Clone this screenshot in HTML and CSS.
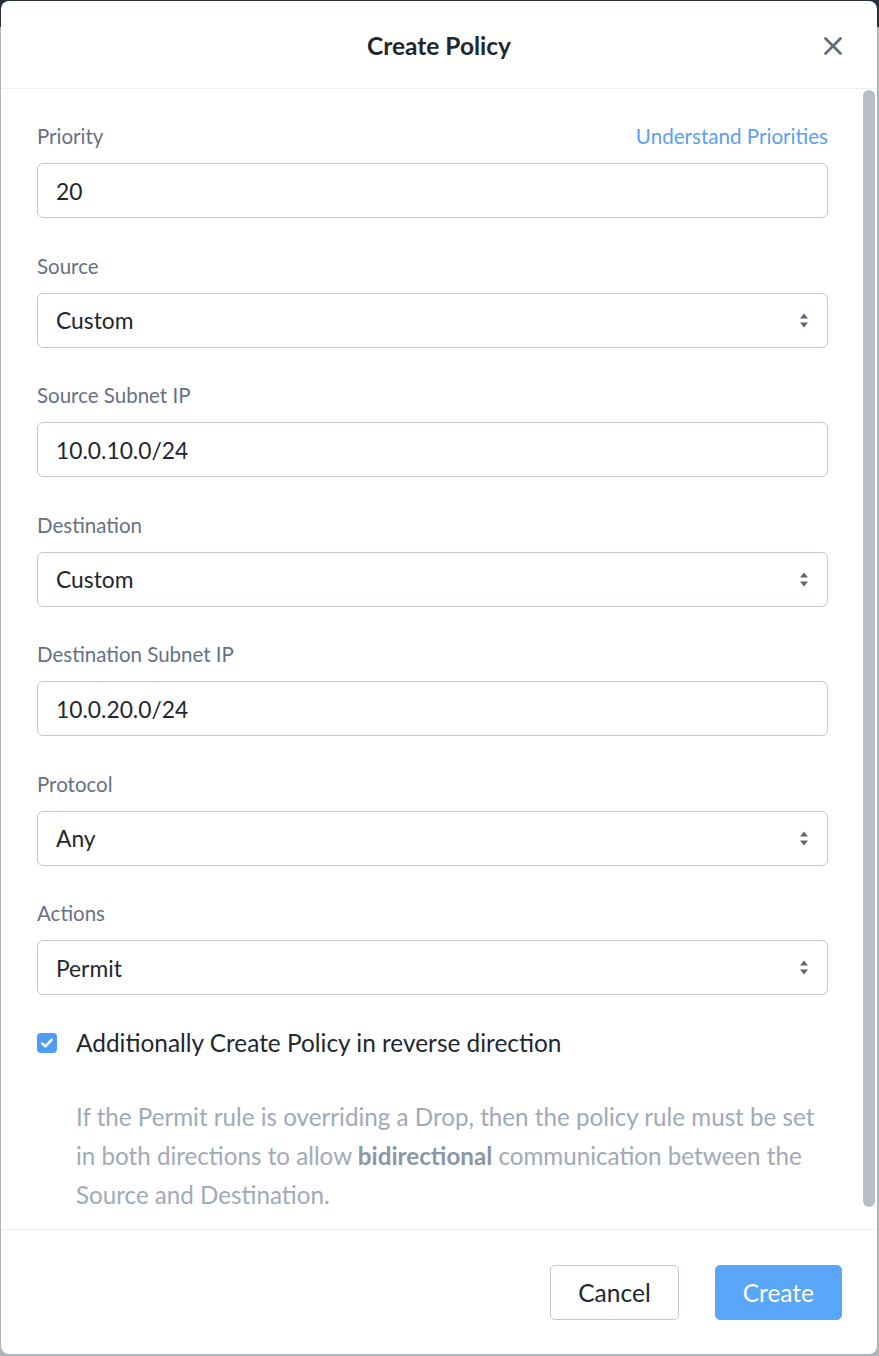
FILE: index.html
```html
<!DOCTYPE html>
<html>
<head>
<meta charset="utf-8">
<link rel="stylesheet" href="styles.css">
</head>
<body>
<div class="backdrop">
  <div class="modal">
    <header class="modal-header">
      <h1 class="modal-title">Create Policy</h1>
      <button class="close-btn" aria-label="Close">
        <svg width="20" height="20" viewBox="0 0 20 20"><path d="M2.5 2.5 L17.5 17.5 M17.5 2.5 L2.5 17.5" stroke="#656d7b" stroke-width="2.8" stroke-linecap="round"/></svg>
      </button>
    </header>
    <div class="modal-body">
      <div class="field">
        <div class="label-row">
          <label class="label">Priority</label>
          <a class="link">Understand Priorities</a>
        </div>
        <div class="input">20</div>
      </div>
      <div class="field">
        <label class="label">Source</label>
        <div class="input select">Custom<svg class="arrows" width="8" height="15" viewBox="0 0 8 15"><path d="M0 5.5 L4 0.5 L8 5.5 Z M0 9.5 L4 14.5 L8 9.5 Z" fill="#5d6675"/></svg></div>
      </div>
      <div class="field">
        <label class="label">Source Subnet IP</label>
        <div class="input">10.0.10.0/24</div>
      </div>
      <div class="field">
        <label class="label">Destination</label>
        <div class="input select">Custom<svg class="arrows" width="8" height="15" viewBox="0 0 8 15"><path d="M0 5.5 L4 0.5 L8 5.5 Z M0 9.5 L4 14.5 L8 9.5 Z" fill="#5d6675"/></svg></div>
      </div>
      <div class="field">
        <label class="label">Destination Subnet IP</label>
        <div class="input">10.0.20.0/24</div>
      </div>
      <div class="field">
        <label class="label">Protocol</label>
        <div class="input select">Any<svg class="arrows" width="8" height="15" viewBox="0 0 8 15"><path d="M0 5.5 L4 0.5 L8 5.5 Z M0 9.5 L4 14.5 L8 9.5 Z" fill="#5d6675"/></svg></div>
      </div>
      <div class="field">
        <label class="label">Actions</label>
        <div class="input select">Permit<svg class="arrows" width="8" height="15" viewBox="0 0 8 15"><path d="M0 5.5 L4 0.5 L8 5.5 Z M0 9.5 L4 14.5 L8 9.5 Z" fill="#5d6675"/></svg></div>
      </div>
      <div class="check-row">
        <span class="checkbox">
          <svg width="14" height="12" viewBox="0 0 14 12"><path d="M2.2 6.4 L5.4 9.4 L11.8 2.6" fill="none" stroke="#fff" stroke-width="2.4" stroke-linecap="round" stroke-linejoin="round"/></svg>
        </span>
        <span class="check-label">Additionally Create Policy in reverse direction</span>
      </div>
      <p class="help">If the Permit rule is overriding a Drop, then the policy rule must be set<br>in both directions to allow <b>bidirectional</b> communication between the<br>Source and Destination.</p>
      <div class="scroll-thumb"></div>
    </div>
    <footer class="modal-footer">
      <button class="btn btn-secondary">Cancel</button>
      <button class="btn btn-primary">Create</button>
    </footer>
  </div>
</div>
</body>
</html>
```
FILE: styles.css
```css
* { box-sizing: border-box; }
html, body { margin: 0; padding: 0; }
body {
  width: 879px;
  height: 1356px;
  overflow: hidden;
  font-family: "Lato", "Liberation Sans", sans-serif;
  background: linear-gradient(#2a2f37 0, #2a2f37 27px, #b1b4bb 27px);
}
.backdrop {
  padding: 1px 2px 2px 1px;
  height: 1356px;
}
.modal {
  width: 876px;
  height: 1353px;
  background: #fff;
  border-radius: 8px;
  display: flex;
  flex-direction: column;
  overflow: hidden;
}
.modal-header {
  height: 88px;
  flex: none;
  display: flex;
  align-items: center;
  justify-content: center;
  position: relative;
  border-bottom: 1px solid #f0f1f3;
}
.modal-title {
  margin: 0;
  font-size: 24.5px;
  font-weight: 700;
  color: #22272e;
  padding-top: 2px;
}
.close-btn {
  position: absolute;
  right: 34px;
  top: 35px;
  width: 20px;
  height: 20px;
  padding: 0;
  border: 0;
  background: none;
  display: flex;
}
.modal-body {
  flex: 1;
  overflow: hidden;
  padding: 36px 49px 36px 36px;
  display: flex;
  flex-direction: column;
  position: relative;
}
.scroll-thumb {
  position: absolute;
  top: 1px;
  bottom: 22px;
  right: 2px;
  width: 12px;
  border-radius: 6px;
  background: #b9bdc7;
}
.field {
  display: flex;
  flex-direction: column;
  gap: 16px;
  margin-bottom: 36.5px;
  flex: none;
}
.label-row {
  display: flex;
  justify-content: space-between;
}
.label {
  font-size: 20.5px;
  line-height: 22px;
  color: #687184;
}
.link {
  font-size: 20.6px;
  line-height: 22px;
  color: #5c9ff2;
}
.input {
  height: 55px;
  border: 1px solid #c4c8d2;
  border-radius: 6px;
  padding: 0 18px;
  display: flex;
  align-items: center;
  font-size: 22.8px;
  color: #22272e;
  position: relative;
}
.arrows {
  position: absolute;
  right: 19px;
  top: 19px;
}
.check-row {
  display: flex;
  align-items: center;
  gap: 19px;
  margin-top: -3px;
  height: 28px;
  flex: none;
}
.checkbox {
  width: 20px;
  height: 20px;
  border-radius: 4px;
  background: #4f9cf5;
  display: flex;
  align-items: center;
  justify-content: center;
  flex: none;
}
.check-label {
  font-size: 24.4px;
  color: #22272e;
}
.help {
  margin: 40px 0 0 39px;
  font-size: 24.2px;
  line-height: 39px;
  color: #a2a9b7;
  flex: none;
  white-space: nowrap;
}
.help b {
  color: #8e96a5;
  font-weight: 700;
}
.modal-footer {
  height: 125px;
  flex: none;
  border-top: 1px solid #f0f1f3;
  display: flex;
  align-items: center;
  justify-content: flex-end;
  gap: 36px;
  padding: 0 35px 0 0;
}
.btn {
  height: 55px;
  padding: 0 27px;
  border-radius: 5px;
  font-family: inherit;
  font-size: 24.5px;
}
.btn-secondary {
  background: #fff;
  border: 1px solid #c4c8d2;
  color: #22272e;
}
.btn-primary {
  background: #5aa6f8;
  border: 1px solid #5aa6f8;
  color: #fff;
}
```
